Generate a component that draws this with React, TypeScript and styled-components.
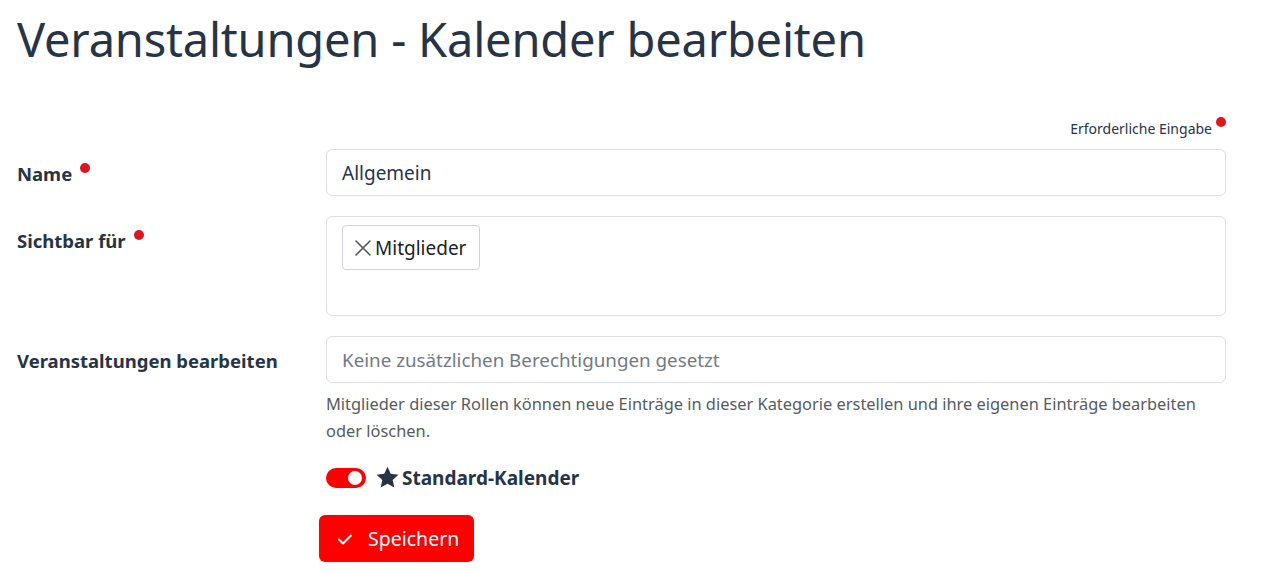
import React from "react";
import styled, { createGlobalStyle } from "styled-components";

const Global = createGlobalStyle`
  html, body { margin: 0; padding: 0; background: #fff; }
  body { font-family: "Noto Sans", "Open Sans", sans-serif; color: #263445; }
  * { box-sizing: border-box; }
`;

const Page = styled.div`
  width: 1272px;
  padding: 6px 46px 0 17px;
`;

const Title = styled.h1`
  margin: 0;
  font-size: 47px;
  font-weight: 400;
  line-height: 66px;
  color: #263445;
  letter-spacing: -0.2px;
`;

const RequiredNote = styled.div`
  display: flex;
  justify-content: flex-end;
  margin-top: 47px;
  padding-right: 0;
  font-size: 14px;
  line-height: 20px;
  color: #263445;
`;

const Dot = styled.span<{ $size?: number }>`
  display: inline-block;
  width: ${(p) => p.$size ?? 10}px;
  height: ${(p) => p.$size ?? 10}px;
  border-radius: 50%;
  background: #e0141c;
  margin-left: 4px;
  align-self: flex-start;
  margin-top: -2px;
`;

const Row = styled.div<{ $mt?: number }>`
  display: grid;
  grid-template-columns: 309px 900px;
  margin-top: ${(p) => p.$mt ?? 22}px;
`;

const Label = styled.div<{ $pt?: number }>`
  display: flex;
  align-items: flex-start;
  font-weight: 700;
  font-size: 18.5px;
  line-height: 26px;
  padding-top: ${(p) => p.$pt ?? 12}px;
  color: #263445;
  & > span + span { margin-left: 8px; margin-top: 2px; }
`;

const Field = styled.div`
  display: flex;
  flex-direction: column;
`;

const Input = styled.div<{ $placeholder?: boolean }>`
  height: 47px;
  border: 1px solid #dcdfe3;
  border-radius: 6px;
  padding: 0 15px;
  display: flex;
  align-items: center;
  font-size: ${(p) => (p.$placeholder ? 18.8 : 19)}px;
  color: ${(p) => (p.$placeholder ? "#737a82" : "#263445")};
`;

const TagBox = styled.div`
  height: 100px;
  border: 1px solid #dcdfe3;
  border-radius: 6px;
  padding: 8px 15px;
`;

const Tag = styled.div`
  display: inline-flex;
  align-items: center;
  height: 45px;
  padding: 0 13px 0 11px;
  border: 1px solid #cfd3d8;
  border-radius: 4px;
  font-size: 19px;
  color: #222;
  gap: 3px;
`;

const Help = styled.div`
  margin-top: 7px;
  font-size: 16.4px;
  line-height: 27px;
  color: #555b61;
`;

const ToggleRow = styled.div`
  display: flex;
  align-items: center;
  margin-top: 21px;
  font-weight: 700;
  font-size: 19px;
  color: #263445;
`;

const Toggle = styled.span`
  position: relative;
  width: 40px;
  height: 20px;
  border-radius: 10px;
  background: #ff0000;
  margin-right: 10px;
  &::after {
    content: "";
    position: absolute;
    right: 4px;
    top: 3px;
    width: 14px;
    height: 14px;
    border-radius: 50%;
    background: #fff;
  }
`;

const Button = styled.button`
  margin-top: 24px;
  margin-left: -7px;
  align-self: flex-start;
  display: inline-flex;
  align-items: center;
  gap: 14px;
  height: 47px;
  padding: 0 15px 0 17px;
  background: #ff0000;
  color: #fff;
  border: none;
  border-radius: 6px;
  font-family: inherit;
  font-size: 19.5px;
`;

const XIcon = () => (
  <svg width="18" height="18" viewBox="0 0 18 18" fill="none" stroke="#555" strokeWidth="1.6" strokeLinecap="round">
    <path d="M2 2l14 14M16 2L2 16" />
  </svg>
);

const StarIcon = () => (
  <svg width="23" height="23" viewBox="0 0 24 24" style={{ marginRight: 3, marginTop: -2 }}>
    <path fill="#263445" d="M12 .8l3.4 7.3 8 .9-6 5.5 1.7 7.9L12 18.4l-7.1 4 1.7-7.9-6-5.5 8-.9z" />
  </svg>
);

const CheckIcon = () => (
  <svg width="18" height="18" viewBox="0 0 18 18" fill="none" stroke="#fff" strokeWidth="2" strokeLinecap="round" strokeLinejoin="round">
    <path d="M3 9.5l4 4 8-8" />
  </svg>
);

export default function App() {
  return (
    <Page>
      <Global />
      <Title>Veranstaltungen - Kalender bearbeiten</Title>
      <RequiredNote>
        Erforderliche Eingabe <Dot $size={10} />
      </RequiredNote>
      <Row $mt={10}>
        <Label>
          <span>Name</span>
          <Dot $size={10} />
        </Label>
        <Field>
          <Input>Allgemein</Input>
        </Field>
      </Row>
      <Row $mt={20}>
        <Label>
          <span>Sichtbar für</span>
          <Dot $size={10} />
        </Label>
        <Field>
          <TagBox>
            <Tag>
              <XIcon />
              Mitglieder
            </Tag>
          </TagBox>
        </Field>
      </Row>
      <Row $mt={20}>
        <Label>
          <span>Veranstaltungen bearbeiten</span>
        </Label>
        <Field>
          <Input $placeholder>Keine zusätzlichen Berechtigungen gesetzt</Input>
          <Help>
            Mitglieder dieser Rollen können neue Einträge in dieser Kategorie erstellen und ihre eigenen Einträge bearbeiten oder löschen.
          </Help>
          <ToggleRow>
            <Toggle />
            <StarIcon />
            Standard-Kalender
          </ToggleRow>
          <Button>
            <CheckIcon />
            Speichern
          </Button>
        </Field>
      </Row>
    </Page>
  );
}
